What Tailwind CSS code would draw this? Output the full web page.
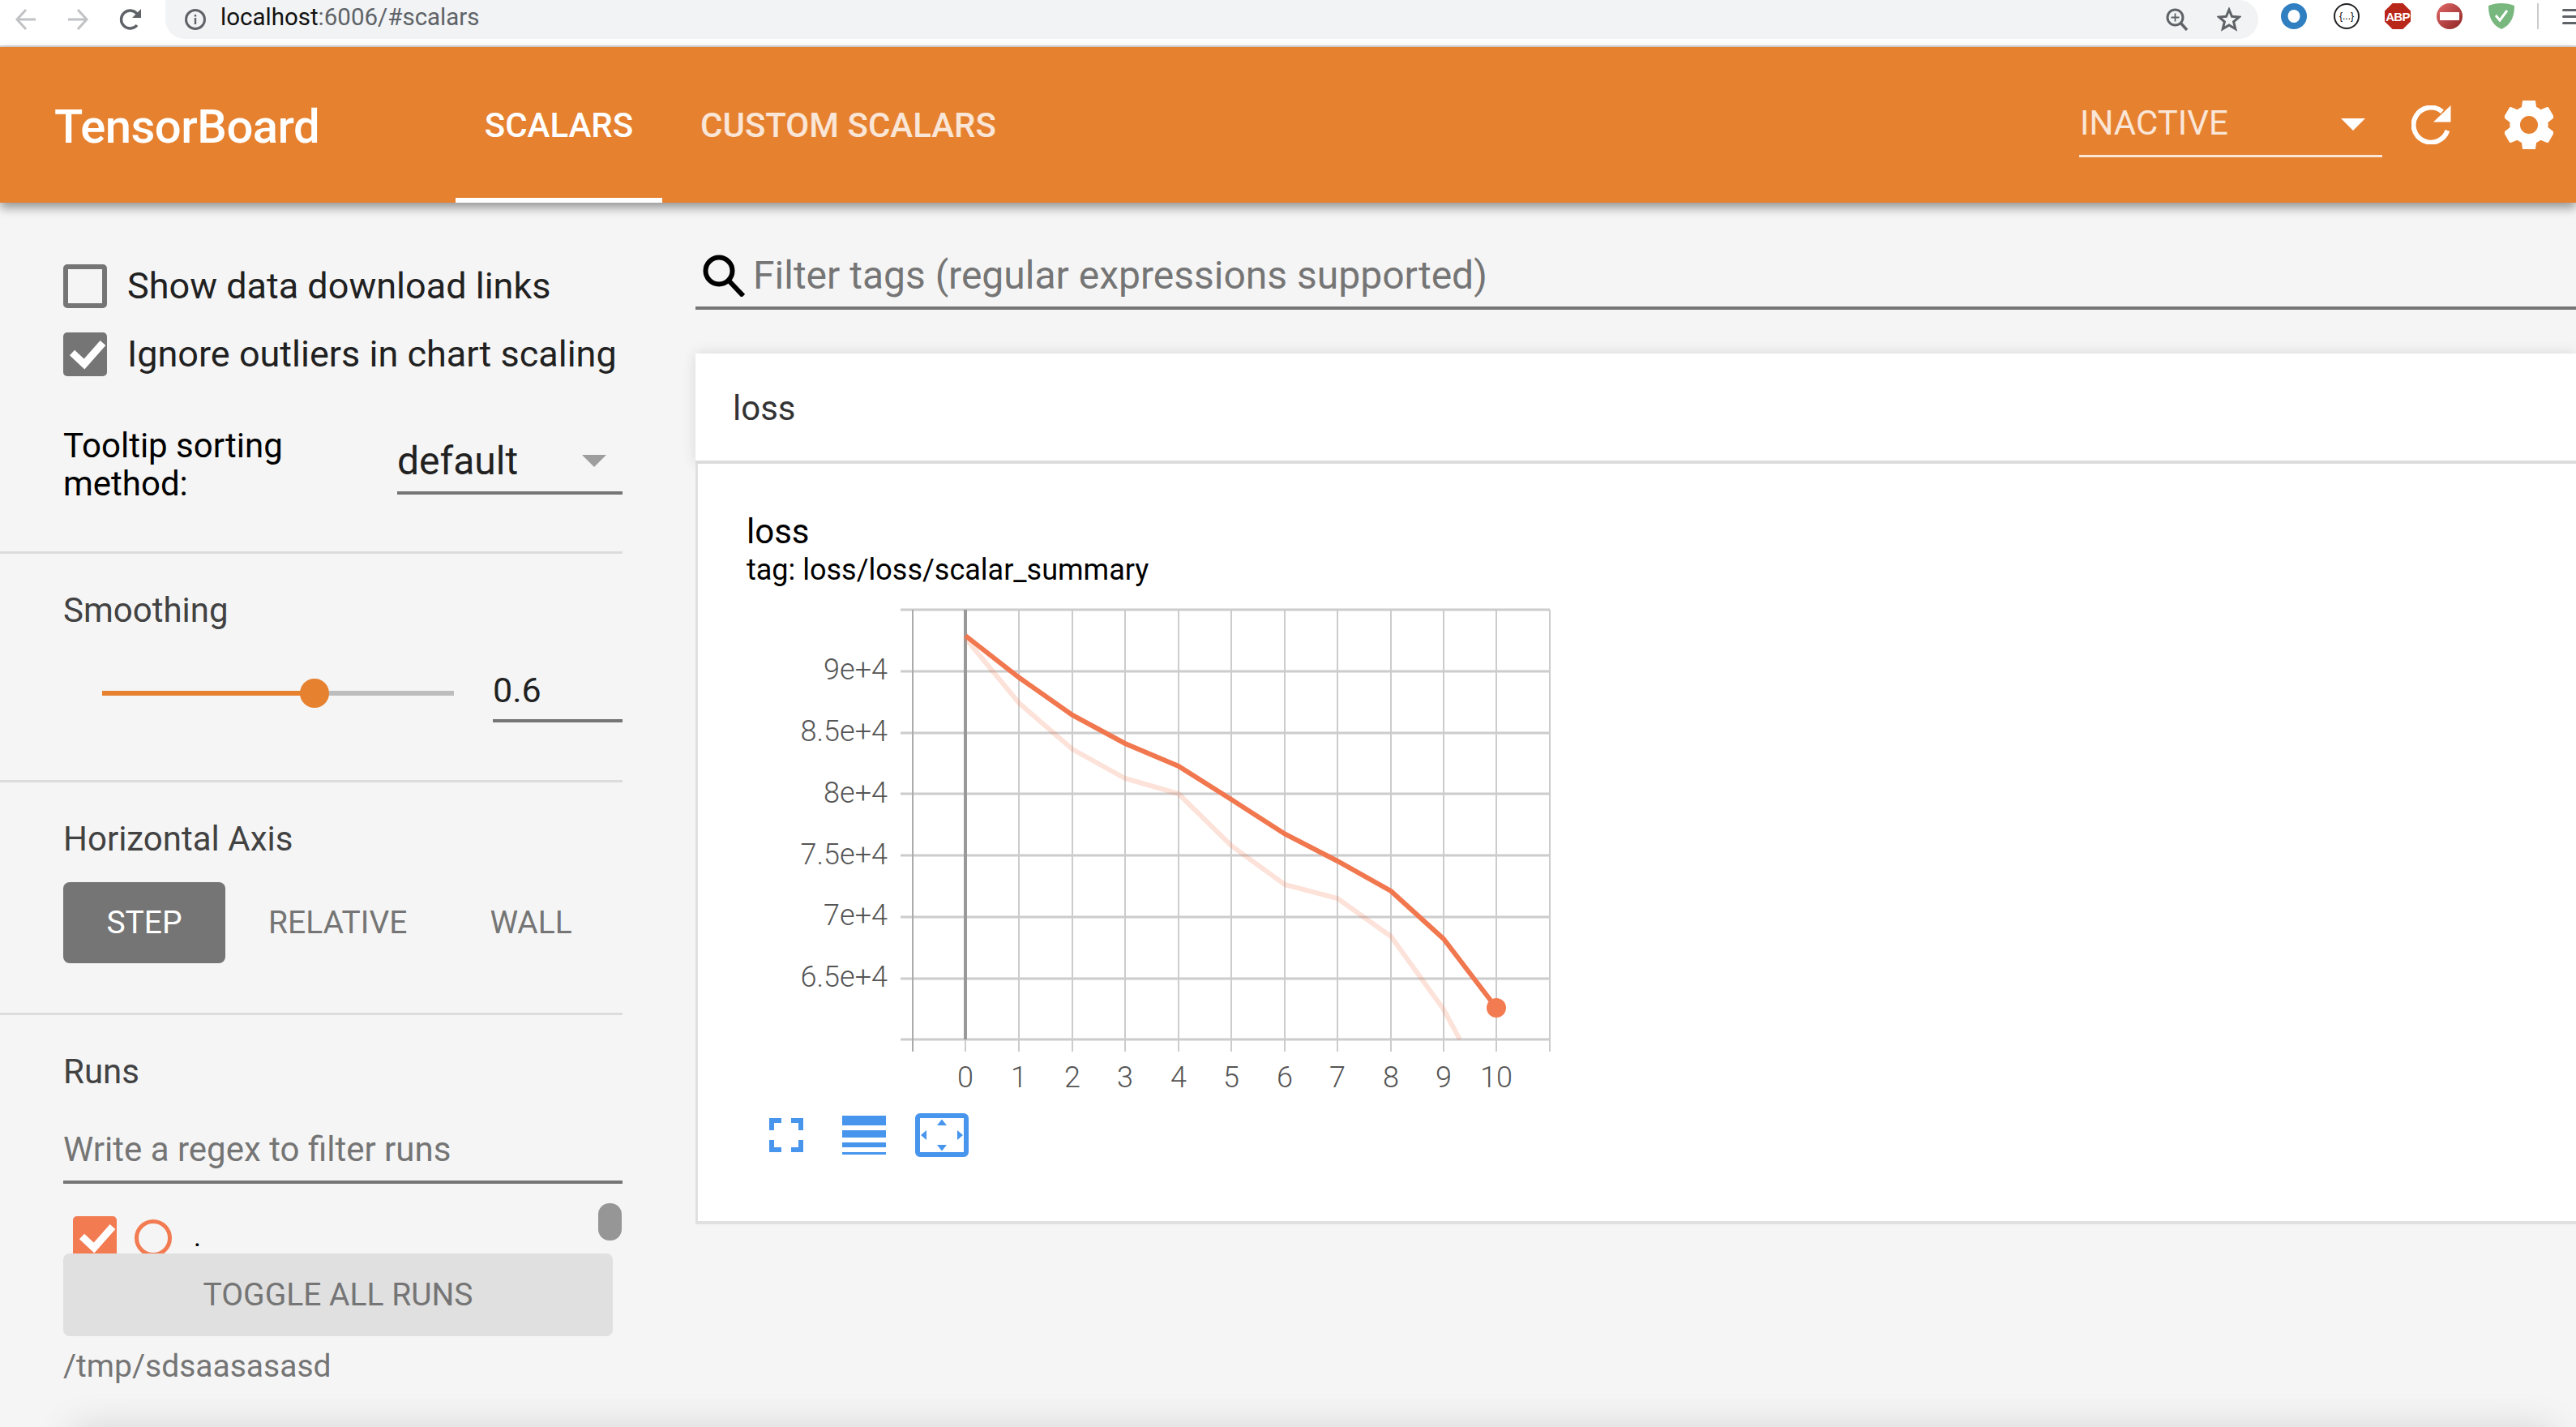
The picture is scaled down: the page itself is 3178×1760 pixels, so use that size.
<!DOCTYPE html>
<html lang="en">
<head>
    <meta charset="UTF-8" />
    <title>TensorBoard</title>
    <script src="https://cdn.jsdelivr.net/npm/@tailwindcss/browser@4"></script>
</head>
<body class="relative h-[1760px] overflow-hidden bg-[#f5f5f5] font-['Roboto',sans-serif] text-[#212121]">
    <!-- browser toolbar -->
    <div class="flex h-[58px] items-start border-b-2 border-[#d9d9d9] bg-white">
        <div class="flex h-[48px] w-[204px] items-center">
            <svg class="ml-[19px]" width="26" height="26" viewBox="0 0 26 26" fill="none" stroke="#c0c2c5" stroke-width="3"><path d="M25 13H3M13 1 2 13l11 12"/></svg>
            <svg class="ml-[38px]" width="26" height="26" viewBox="0 0 26 26" fill="none" stroke="#c0c2c5" stroke-width="3"><path d="M1 13h22M13 1l11 12-11 12"/></svg>
            <svg class="ml-[38px]" width="28" height="28" viewBox="0 0 28 28" fill="none"><path d="M22 21a11 11 0 1 1 0-14" stroke="#5f6368" stroke-width="3.4"/><path d="M27 1v11H16z" fill="#5f6368"/></svg>
        </div>
        <div class="flex h-[48px] w-[2582px] items-center rounded-r-[28px] rounded-bl-[28px] bg-[#f1f3f4] pl-[24px] pr-[21px]">
            <svg width="26" height="26" viewBox="0 0 26 26" fill="none" stroke="#5f6368"><circle cx="13" cy="13" r="11.5" stroke-width="3"/><path d="M13 11v8M13 7v2.5" stroke-width="2.4"/></svg>
            <span class="ml-[18px] mt-[-6px] text-[29.5px] leading-[40px] text-[#111]">localhost<span class="text-[#5f6368]">:6006/#scalars</span></span>
            <svg class="ml-auto" width="28" height="28" viewBox="0 0 28 28" fill="none" stroke="#5f6368"><circle cx="11.5" cy="11.5" r="9.5" stroke-width="3"/><path d="m18 18 8 9" stroke-width="3.4"/><path d="M11.5 6.5v10M6.5 11.5h10" stroke-width="1.8"/></svg>
            <svg class="ml-[35px]" width="30" height="30" viewBox="0 0 30 30" fill="none" stroke="#5f6368" stroke-width="3"><path d="m15 3 3.5 8.3 9 .7-6.9 5.8 2.2 8.8-7.800-4.700-7.800 4.700 2.200-8.800L2.500 12l9-.7z"/></svg>
        </div>
        <div class="flex h-[40px] flex-1 items-center overflow-hidden">
            <svg class="ml-[28px] shrink-0" width="32" height="32" viewBox="0 0 32 32"><circle cx="16" cy="16" r="16" fill="#2f7fc1"/><ellipse cx="16" cy="16" rx="7.500" ry="8" fill="#fff"/></svg>
            <div class="ml-[33px] flex h-[32px] w-[32px] shrink-0 items-center justify-center rounded-full border-2 border-[#222] bg-white font-['Liberation_Sans',sans-serif] text-[12px] leading-none text-black">{...}</div>
            <div class="ml-[31px] flex h-[32px] w-[32px] shrink-0 items-center justify-center bg-[#b9271b] font-['Liberation_Sans',sans-serif] text-[15px] font-bold leading-none tracking-tighter text-white [clip-path:polygon(30%_0,70%_0,100%_30%,100%_70%,70%_100%,30%_100%,0_70%,0_30%)]">ABP</div>
            <svg class="ml-[32px] shrink-0" width="32" height="32" viewBox="0 0 32 32"><defs><linearGradient id="stopfill" x1="0" y1="0" x2="1" y2="1"><stop offset="0" stop-color="#e16a6a"/><stop offset="1" stop-color="#8f2323"/></linearGradient></defs><circle cx="16" cy="16" r="16" fill="url(#stopfill)"/><rect x="4" y="11" width="24" height="10" fill="#fff"/></svg>
            <svg class="ml-[32px] shrink-0" width="32" height="32" viewBox="0 0 32 32"><path d="M16 0c6 0 11 1 16 3 0 12-3 23-16 29C3 26 0 15 0 3c5-2 10-3 16-3z" fill="#78b77e"/><path d="m9 15 5 6 9-12" fill="none" stroke="#fff" stroke-width="3"/></svg>
            <div class="ml-[28px] h-[32px] w-[2px] shrink-0 bg-[#ccc]"></div>
            <div class="ml-[29px] flex shrink-0 flex-col gap-[5px]">
                <div class="h-[3px] w-[30px] rounded bg-[#5f6368]"></div>
                <div class="h-[3px] w-[30px] rounded bg-[#5f6368]"></div>
                <div class="h-[3px] w-[30px] rounded bg-[#5f6368]"></div>
            </div>
        </div>
    </div>

    <!-- app toolbar -->
    <div class="relative z-10 flex h-[192px] items-start bg-[#e68130] text-white shadow-[0_6px_12px_rgba(0,0,0,0.4)]">
        <div class="mt-[66px] w-[562px] pl-[67px] text-[58px] font-medium leading-[64px] tracking-[-0.5px]">TensorBoard</div>
        <div class="flex h-[192px] w-[255px] justify-center border-b-[6px] border-white pt-[72px] text-[42px] font-medium leading-[50px]">SCALARS</div>
        <div class="ml-[47px] pt-[72px] text-[42px] font-medium leading-[50px] text-white/80">CUSTOM SCALARS</div>
        <div class="ml-auto mt-[66px] flex h-[70px] w-[374px] items-start border-b-[3px] border-white/80 pl-[1px] pt-[3px] text-[42px] leading-[50px] text-white/80">
            INACTIVE
            <div class="ml-auto mr-[21px] mt-[19px] h-0 w-0 border-x-[15px] border-t-[15px] border-x-transparent border-t-white"></div>
        </div>
        <svg class="ml-[36px] mt-[72px]" width="49" height="48" viewBox="0 0 49 48" fill="none"><path d="M44.400 31A21.500 21.500 0 1 1 38 7.700" stroke="#fff" stroke-width="6"/><path d="M48.500 0v20.500H27z" fill="#fff"/></svg>
        <svg class="ml-[66px] mr-[28px] mt-[66px]" width="60" height="60" viewBox="2.500 2.500 19 19"><path fill="#fff" d="M19.430 12.980c.040-.320.070-.640.070-.980s-.030-.660-.070-.980l2.110-1.650c.190-.150.240-.420.120-.640l-2-3.460c-.120-.220-.390-.300-.610-.220l-2.490 1c-.520-.400-1.080-.730-1.690-.980l-.380-2.650C14.460 2.180 14.250 2 14 2h-4c-.250 0-.460.180-.490.420l-.380 2.650c-.610.250-1.170.590-1.690.980l-2.490-1c-.230-.090-.490 0-.610.220l-2 3.460c-.130.220-.070.490.120.640l2.110 1.650c-.040.320-.070.650-.070.980s.030.660.070.980l-2.110 1.650c-.190.150-.240.420-.120.640l2 3.460c.120.220.390.300.610.220l2.490-1c.520.400 1.080.730 1.690.980l.380 2.650c.030.240.240.420.490.420h4c.250 0 .460-.180.490-.420l.380-2.650c.610-.250 1.170-.590 1.690-.980l2.490 1c.230.090.490 0 .610-.220l2-3.460c.120-.220.070-.490-.120-.640l-2.110-1.650zM12 15.500c-1.930 0-3.500-1.570-3.500-3.500s1.570-3.500 3.500-3.500 3.500 1.570 3.500 3.500-1.570 3.500-3.500 3.500z"/></svg>
    </div>

    <div class="flex h-[1510px]">
        <!-- sidebar -->
        <aside class="w-[768px] shrink-0 text-[42px]">
            <section class="h-[433px] border-b-[3px] border-[#dcdcdc] pl-[78px] pt-[76px] text-[45px]">
                <label class="flex h-[54px] items-center gap-[25px]">
                    <span class="h-[54px] w-[54px] rounded-[5px] border-[6px] border-[#757575]"></span>
                    <span class="leading-[54px]">Show data download links</span>
                </label>
                <label class="mt-[30px] flex h-[54px] items-center gap-[25px]">
                    <span class="flex h-[54px] w-[54px] items-center justify-center rounded-[5px] bg-[#757575]">
                        <svg width="54" height="54" viewBox="0 0 54 54" fill="none"><path d="m11 25 15 14 23-26" stroke="#fff" stroke-width="9"/></svg>
                    </span>
                    <span class="whitespace-nowrap leading-[54px]">Ignore outliers in chart scaling</span>
                </label>
                <div class="mt-[62px] flex">
                    <div class="w-[412px] text-[42px] leading-[47px] text-black"><span class="block">Tooltip sorting</span><span class="block">method:</span></div>
                    <div class="relative mt-[5px] flex h-[79px] w-[278px] items-start border-b-[4px] border-[#757575] pt-[10px] text-[48px] leading-[56px]">
                        default
                        <div class="absolute right-[20px] top-[30px] h-0 w-0 border-x-[15px] border-t-[15px] border-x-transparent border-t-[#9e9e9e]"></div>
                    </div>
                </div>
            </section>

            <section class="h-[282px] border-b-[3px] border-[#dcdcdc] pl-[78px] pt-[46px]">
                <div class="leading-[48px] text-[#424242]">Smoothing</div>
                <div class="mt-[42px] flex h-[72px] items-center">
                    <div class="relative ml-[48px] h-[6px] w-[434px] bg-[#bdbdbd]">
                        <div class="h-full w-[262px] bg-[#e68130]"></div>
                        <div class="absolute left-[244px] top-[-15px] h-[36px] w-[36px] rounded-full bg-[#e68130]"></div>
                    </div>
                    <div class="ml-[48px] h-[72px] w-[160px] border-b-[4px] border-[#757575] pt-[6px] text-[43px] leading-[52px]">0.6</div>
                </div>
            </section>

            <section class="h-[287px] border-b-[3px] border-[#dcdcdc] pl-[78px] pt-[46px]">
                <div class="leading-[48px] text-[#424242]">Horizontal Axis</div>
                <div class="mt-[29px] flex text-[39px] leading-[100px] text-[#757575]">
                    <div class="w-[200px] rounded-[8px] bg-[#757575] text-center text-white">STEP</div>
                    <div class="ml-[53px]">RELATIVE</div>
                    <div class="ml-[102px]">WALL</div>
                </div>
            </section>

            <section class="pl-[78px] pt-[46px]">
                <div class="leading-[48px] text-[#424242]">Runs</div>
                <div class="mt-[48px] h-[66px] w-[690px] border-b-[4px] border-[#757575] leading-[48px] text-[#757575]">Write a regex to filter runs</div>
                <div class="relative h-[86px] w-[690px] overflow-hidden">
                    <div class="ml-[12px] mt-[40px] flex items-start">
                        <span class="flex h-[54px] w-[54px] shrink-0 items-center justify-center rounded-[5px] bg-[#f27b52]">
                            <svg width="54" height="54" viewBox="0 0 54 54" fill="none"><path d="m11 25 15 14 23-26" stroke="#fff" stroke-width="9"/></svg>
                        </span>
                        <span class="ml-[22px] mt-[4px] h-[46px] w-[46px] shrink-0 rounded-full border-[5px] border-[#f27b52]"></span>
                        <span class="ml-[27px] mt-[-2px] text-[34px] leading-[54px] text-black">.</span>
                    </div>
                    <div class="absolute right-[1px] top-[24px] h-[46px] w-[29px] rounded-[14px] bg-[#969696]"></div>
                </div>
                <div class="w-[678px] rounded-[8px] bg-[#e0e0e0] text-center text-[39px] leading-[102px] text-[#757575]">TOGGLE ALL RUNS</div>
                <div class="mt-[13px] text-[39px] leading-[48px] text-[#757575]">/tmp/sdsaasasasd</div>
            </section>
        </aside>

        <!-- main column -->
        <main class="min-w-0 flex-1 pl-[90px]">
            <div class="flex h-[132px] items-end border-b-[4px] border-[#757575] pb-[10px]">
                <svg class="mb-[2px] ml-[9px] shrink-0" width="52" height="52" viewBox="0 0 52 52" fill="none" stroke="#000"><circle cx="20" cy="20" r="16.500" stroke-width="6"/><path d="m32 32 18 19" stroke-width="6"/></svg>
                <div class="ml-[10px] text-[48px] leading-[56px] text-[#757575]">Filter tags (regular expressions supported)</div>
            </div>
            <div class="mt-[54px] h-[136px] border-b-[4px] border-[#dcdcdc] bg-white pl-[46px] pt-[44px] text-[42px] leading-[48px] text-[#333] shadow-[0_0_16px_rgba(0,0,0,0.12)]">loss</div>
            <div class="relative h-[938px] border-b-[4px] border-l-[3px] border-[#e0e0e0] bg-white pl-[60px] pt-[60px]">
                <div class="text-[42px] leading-[48px] text-black">loss</div>
                <div class="mt-[1px] text-[36px] leading-[44px] text-black">tag: loss/loss/scalar_summary</div>
                <svg class="mt-[10px] block" width="1000" height="705" viewBox="921 735 1000 705" fill="none">
                    <!-- grid -->
                    <g stroke="#ccc" stroke-width="3">
                        <path d="M1111 752H1912M1111 828H1912M1111 904H1912M1111 979H1912M1111 1055H1912M1111 1131H1912M1111 1207H1912M1111 1282H1912"/>
                    </g>
                    <g stroke="#ccc" stroke-width="2">
                        <path d="M1257 752V1297M1323 752V1297M1388 752V1297M1454 752V1297M1519 752V1297M1585 752V1297M1650 752V1297M1716 752V1297M1781 752V1297M1846 752V1297M1912 752V1297"/>
                    </g>
                    <path d="M1126 752V1297" stroke="#aaa" stroke-width="2"/>
                    <path d="M1191 752V1282" stroke="#999" stroke-width="4"/>
                    <path d="M1191 1282V1297" stroke="#ccc" stroke-width="2"/>
                    <!-- raw series -->
                    <path d="M1191 787 1257 867 1323 924 1388 960 1454 979 1519 1043 1585 1091 1650 1108 1716 1155 1781 1245 1801 1282" stroke="#f27b52" stroke-opacity="0.22" stroke-width="6"/>
                    <!-- smoothed series -->
                    <path d="M1191 784 1257 835.500 1323 882 1388 917 1454 945 1519 986 1585 1028.500 1650 1062 1716 1099 1781 1158 1846 1243" stroke="#f1774f" stroke-width="6"/>
                    <circle cx="1846" cy="1243" r="12" fill="#f27b52"/>
                    <!-- labels -->
                    <g fill="#555" font-size="36" font-weight="300" text-anchor="end">
                        <text x="1095" y="838">9e+4</text>
                        <text x="1095" y="914">8.5e+4</text>
                        <text x="1095" y="990">8e+4</text>
                        <text x="1095" y="1066">7.5e+4</text>
                        <text x="1095" y="1141">7e+4</text>
                        <text x="1095" y="1217">6.5e+4</text>
                    </g>
                    <g fill="#555" font-size="36" font-weight="300" text-anchor="middle">
                        <text x="1191" y="1341">0</text>
                        <text x="1257" y="1341">1</text>
                        <text x="1323" y="1341">2</text>
                        <text x="1388" y="1341">3</text>
                        <text x="1454" y="1341">4</text>
                        <text x="1519" y="1341">5</text>
                        <text x="1585" y="1341">6</text>
                        <text x="1650" y="1341">7</text>
                        <text x="1716" y="1341">8</text>
                        <text x="1781" y="1341">9</text>
                        <text x="1846" y="1341">10</text>
                    </g>
                    <!-- chart buttons -->
                    <path d="M952 1394v-12h12M976 1382h12v12M988 1406v12h-12M964 1418h-12v-12" stroke="#4795ec" stroke-width="6"/>
                    <g fill="#4795ec">
                        <rect x="1039" y="1376" width="54" height="12"/>
                        <rect x="1039" y="1394" width="54" height="9"/>
                        <rect x="1039" y="1409" width="54" height="6"/>
                        <rect x="1039" y="1421" width="54" height="3"/>
                        <path d="M1162 1380.500l6 7.500h-12zM1162 1419.500l-6-7.500h12zM1136 1400l7-6v12zM1188 1400l-7-6v12z"/>
                    </g>
                    <rect x="1132" y="1376" width="60" height="48" rx="3" stroke="#4795ec" stroke-width="6"/>
                </svg>
            </div>
        </main>
    </div>
    <!-- faint shadow along the bottom of the capture -->
    <div class="absolute left-[90px] right-[30px] top-[1765px] h-[60px] shadow-[0_0_50px_rgba(0,0,0,0.16)]"></div>
</body>
</html>
